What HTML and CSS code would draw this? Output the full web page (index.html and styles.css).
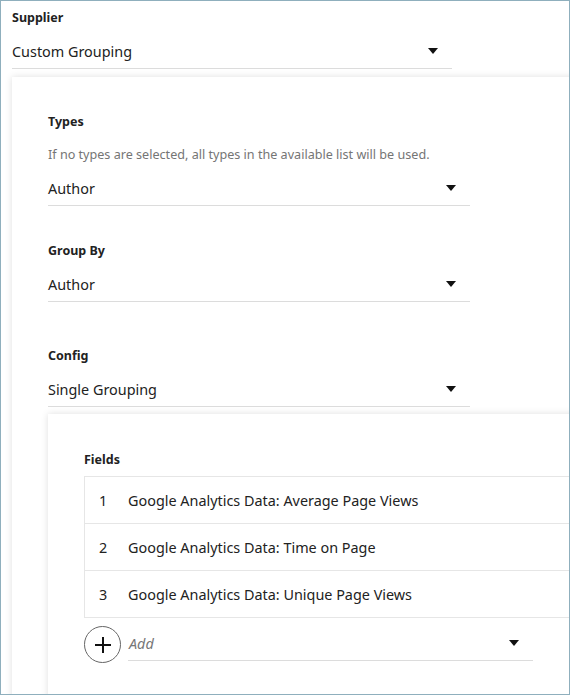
FILE: index.html
```html
<!DOCTYPE html>
<html lang="en">
  <head>
    <meta charset="UTF-8" />
    <meta name="viewport" content="width=device-width, initial-scale=1.0" />
    <title>Supplier Grouping</title>
    <link rel="stylesheet" href="styles.css">
  </head>
  <body>
    <main class="frame">
      <div class="field field-top">
        <label class="field-label">Supplier</label>
        <div class="select select-wide">
          <span>Custom Grouping</span>
          <span class="caret" aria-hidden="true"></span>
        </div>
      </div>

      <section class="card">
        <div class="field">
          <label class="field-label">Types</label>
          <p class="hint">If no types are selected, all types in the available list will be used.</p>
          <div class="select">
            <span>Author</span>
            <span class="caret" aria-hidden="true"></span>
          </div>
        </div>

        <div class="field field-groupby">
          <label class="field-label">Group By</label>
          <div class="select">
            <span>Author</span>
            <span class="caret" aria-hidden="true"></span>
          </div>
        </div>

        <div class="field field-config">
          <label class="field-label">Config</label>
          <div class="select">
            <span>Single Grouping</span>
            <span class="caret" aria-hidden="true"></span>
          </div>
        </div>

        <section class="card card-inner">
          <label class="field-label">Fields</label>
          <ol class="field-list">
            <li><span class="num">1</span>Google Analytics Data: Average Page Views</li>
            <li><span class="num">2</span>Google Analytics Data: Time on Page</li>
            <li><span class="num">3</span>Google Analytics Data: Unique Page Views</li>
          </ol>
          <div class="add-row">
            <button class="add-btn" type="button" aria-label="Add field">
              <svg width="20" height="20" viewBox="0 0 20 20" aria-hidden="true">
                <path d="M10 2v16M2 10h16" stroke="#111" stroke-width="2" fill="none"/>
              </svg>
            </button>
            <div class="select select-add">
              <span class="placeholder">Add</span>
              <span class="caret" aria-hidden="true"></span>
            </div>
          </div>
        </section>
      </section>
    </main>
  </body>
</html>
```

FILE: styles.css
```css
* {
  box-sizing: border-box;
}

body {
  margin: 0;
  font-family: "Noto Sans", "Open Sans", sans-serif;
  color: #222;
  background: #fff;
}

.frame {
  width: 570px;
  height: 695px;
  border: 1px solid #8fafbd;
  overflow: hidden;
  padding: 8px 0 0 11px;
}

.field-label {
  display: block;
  font-size: 12.5px;
  font-weight: 700;
  line-height: 18px;
  color: #222;
}

.hint {
  margin: 15px 0 0;
  font-size: 12.6px;
  line-height: 18px;
  color: #757575;
}

.select {
  width: 422px;
  height: 33px;
  margin-top: 9px;
  padding: 0 14px 1px 0;
  display: flex;
  align-items: center;
  justify-content: space-between;
  border-bottom: 1px solid #dcdcdc;
  font-size: 14.4px;
}

.select-wide {
  width: 440px;
}

.caret {
  width: 0;
  height: 0;
  border-left: 5px solid transparent;
  border-right: 5px solid transparent;
  border-top: 6px solid #111;
  margin-top: -2px;
}

.card {
  margin: 8px -30px 0 0;
  padding: 36px 0 0 36px;
  background: #fff;
  box-shadow: 0 0 7px rgba(0, 0, 0, 0.13);
  height: 700px;
}

.field-groupby {
  margin-top: 36px;
}

.field-config {
  margin-top: 45px;
}

.card-inner {
  margin-top: 7px;
  padding-top: 37px;
}

.field-list {
  list-style: none;
  margin: 7px 0 0;
  padding: 0;
  border: 1px solid #e6e6e6;
  border-right: 0;
}

.field-list li {
  height: 47px;
  display: flex;
  align-items: center;
  font-size: 14.4px;
  border-top: 1px solid #e6e6e6;
}

.field-list li:first-child {
  border-top: 0;
  height: 46px;
}

.num {
  width: 36px;
  margin-right: 7px;
  text-align: center;
}

.add-row {
  display: flex;
  align-items: center;
  gap: 7px;
  margin-top: 8px;
}

.add-btn {
  width: 37px;
  height: 37px;
  border: 1px solid #666;
  border-radius: 50%;
  background: #fff;
  padding: 0;
  display: flex;
  align-items: center;
  justify-content: center;
}

.select-add {
  width: 405px;
  margin-top: 0;
  padding: 0 14px 1px 1px;
}

.placeholder {
  font-style: italic;
  color: #777;
  padding-right: 2px;
}
```
